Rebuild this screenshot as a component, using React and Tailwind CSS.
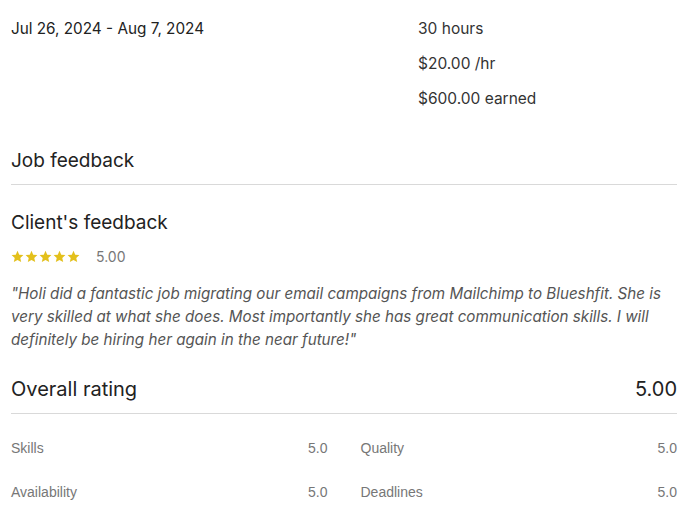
import { useState } from "react";

const stats = ["30 hours", "$20.00 /hr", "$600.00 earned"];

const scores = [
  ["Skills", "5.0"],
  ["Quality", "5.0"],
  ["Availability", "5.0"],
  ["Deadlines", "5.0"],
];

function Star() {
  return (
    <svg width="13" height="13" viewBox="0 0 24 24" className="fill-[#e3c01c]">
      <path d="M12 1.5l3.2 7.1 7.7.8-5.8 5.2 1.7 7.6L12 18.3l-6.8 3.9 1.7-7.6L1.1 9.4l7.7-.8z" />
    </svg>
  );
}

export default function App() {
  const [rating] = useState(5);

  return (
    <div className="w-[700px] h-[526px] overflow-hidden bg-white pl-[11px] pr-[23px] text-[#222] font-['Inter',sans-serif]">

      {/* CONTRACT SUMMARY */}
      <div className="flex pt-[11px]">
        <div className="w-[407px] text-[15.3px] leading-[35px]">Jul 26, 2024 - Aug 7, 2024</div>
        <div className="flex flex-col text-[15.5px] leading-[35px] text-[#333]">
          {stats.map((s) => (
            <span key={s}>{s}</span>
          ))}
        </div>
      </div>

      {/* JOB FEEDBACK */}
      <h2 className="mt-[31px] text-[19px] leading-[28px]">Job feedback</h2>
      <div className="mt-[9px] h-px bg-[#d9d9d9]" />

      <h3 className="mt-[24px] text-[19px] leading-[28px]">Client's feedback</h3>
      <div className="mt-[9px] flex items-center h-[20px]">
        <div className="flex gap-px">
          {Array.from({ length: rating }).map((_, i) => (
            <Star key={i} />
          ))}
        </div>
        <span className="ml-[16px] text-[14px] text-[#777]">5.00</span>
      </div>

      <p className="mt-[16px] text-[15.2px] leading-[23px] italic text-[#555]">
        "Holi did a fantastic job migrating our email campaigns from Mailchimp to Blueshfit. She is very skilled at what she does. Most importantly she has great communication skills. I will definitely be hiring her again in the near future!"
      </p>

      {/* OVERALL RATING */}
      <div className="mt-[23px] flex items-center justify-between text-[20px] leading-[30px]">
        <span>Overall rating</span>
        <span>5.00</span>
      </div>
      <div className="mt-[9px] h-px bg-[#d9d9d9]" />

      <div className="mt-[24px] grid grid-cols-2 gap-x-[33px] gap-y-[24px] text-[14px] leading-[20px] text-[#777] font-['Liberation_Sans',sans-serif]">
        {scores.map(([label, value]) => (
          <div key={label} className="flex justify-between">
            <span>{label}</span>
            <span>{value}</span>
          </div>
        ))}
      </div>
    </div>
  );
}
